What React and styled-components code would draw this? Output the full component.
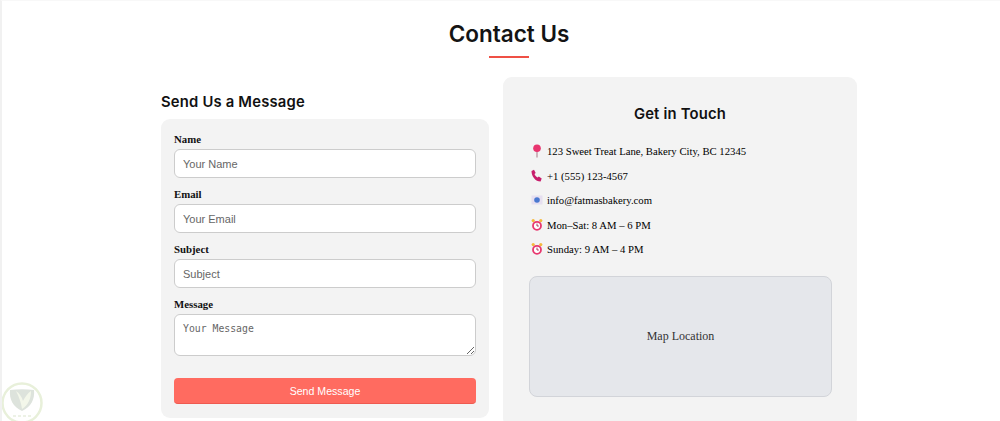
import React from "react";
import styled, { createGlobalStyle } from "styled-components";

const GlobalStyle = createGlobalStyle`
  html, body { margin: 0; padding: 0; background: #fff; height: 100%; overflow: hidden; }
  * { box-sizing: border-box; }
`;

const Page = styled.section`
  position: relative;
  width: 1000px;
  height: 421px;
  overflow: hidden;
  background: #fff;
  border-left: 2px solid #f1f1f1;
  border-top: 1px solid #f8f8f8;
  padding: 20px 0 0 16px;
  font-family: "Liberation Serif", serif;
`;
const Title = styled.h2`
  margin: 0;
  width: 982px;
  text-align: center;
  font: 600 22.5px/26px Inter, sans-serif;
  color: #141414;
`;
const Rule = styled.div`
  width: 40px;
  height: 2px;
  margin: 9px auto 0;
  background: #ef5045;
`;
const RuleRow = styled.div`
  width: 982px;
`;
const Columns = styled.div`
  display: grid;
  grid-template-columns: 328px 354px;
  gap: 14px;
  width: 696px;
  margin: 19px 0 0 143px;
`;
const Left = styled.div`
  padding-top: 16px;
`;
const SubTitle = styled.h3`
  margin: 0 0 8px;
  font: 600 14.8px/18px Inter, sans-serif;
  letter-spacing: 0.2px;
  color: #111;
`;
const FormCard = styled.form`
  height: 299px;
  padding: 14px 13px 0 13px;
  background: #f3f3f3;
  border-radius: 9px;
`;
const Field = styled.div`
  margin-bottom: 10px;
`;
const Label = styled.label`
  display: block;
  margin-bottom: 3px;
  font-size: 10.8px;
  line-height: 13px;
  font-weight: 700;
  color: #111;
`;
const Input = styled.input`
  display: block;
  width: 302px;
  height: 29px;
  padding: 0 8px;
  background: #fff;
  border: 1px solid #ccc;
  border-radius: 6px;
  font: 11px "Liberation Sans", sans-serif;
  &::placeholder { color: #666; opacity: 1; }
`;
const TextArea = styled.textarea`
  display: block;
  width: 302px;
  height: 42px;
  padding: 8px;
  background: #fff;
  border: 1px solid #ccc;
  border-radius: 6px;
  font: 9.8px/12px "DejaVu Sans Mono", monospace;
  &::placeholder { color: #666; opacity: 1; }
`;
const SendButton = styled.button`
  display: block;
  width: 302px;
  height: 26px;
  margin-top: 22px;
  background: #ff6b60;
  border: 0;
  border-bottom: 1px solid #ee5a50;
  border-radius: 4px;
  color: #fff;
  font: 10.6px "Liberation Sans", sans-serif;
`;
const InfoPanel = styled.div`
  height: 350px;
  padding: 28px 26px 0;
  background: #f3f3f3;
  border-radius: 9px;
`;
const InfoTitle = styled.h3`
  margin: 0 0 15px;
  text-align: center;
  font: 600 14.8px/19px Inter, sans-serif;
  letter-spacing: 0.2px;
  color: #111;
`;
const InfoRow = styled.div`
  display: flex;
  align-items: center;
  gap: 4px;
  height: 24.5px;
  padding-left: 2px;
  font-size: 10.7px;
  color: #000;
`;
const IconBox = styled.span`
  display: inline-flex;
  width: 12px;
  height: 14px;
  align-items: center;
  justify-content: center;
`;
const MapBox = styled.div`
  display: flex;
  align-items: center;
  justify-content: center;
  width: 303px;
  height: 121px;
  margin-top: 14px;
  background: #e5e7eb;
  border: 1px solid #d2d4d9;
  border-radius: 8px;
  font-size: 12px;
  color: #333;
`;
const Badge = styled.svg`
  position: absolute;
  left: -2px;
  top: 378px;
`;

const Pin = () => (
  <svg width="12" height="14" viewBox="0 0 12 14">
    <path d="M6 7v6.500" stroke="#b58a96" strokeWidth="1.200" />
    <circle cx="6" cy="4.200" r="3.800" fill="#e8356f" />
  </svg>
);
const Phone = () => (
  <svg width="12" height="14" viewBox="0 0 12 14">
    <path d="M0.500 2 3 0.700l1.700 3.300-1.200 1.100c.5 1.500 1.600 2.700 3 3.400l1.300-1.100 2.900 2L9.600 12.500C4.500 12.500.5 7.500.5 2Z" fill="#c81e6c" />
  </svg>
);
const Mail = () => (
  <svg width="12" height="14" viewBox="0 0 12 14">
    <rect x="0.500" y="2.500" width="11" height="9" fill="#e6dff0" />
    <circle cx="6" cy="7" r="2.800" fill="#4a78d0" />
  </svg>
);
const Clock = () => (
  <svg width="12" height="14" viewBox="0 0 12 14">
    <circle cx="2.200" cy="2.600" r="1.600" fill="#f5b93e" />
    <circle cx="9.800" cy="2.600" r="1.600" fill="#f5b93e" />
    <circle cx="6" cy="7.800" r="4" fill="#fff" stroke="#e8386f" strokeWidth="1.800" />
    <path d="M6 5.600v2.400h1.800" fill="none" stroke="#a3224c" strokeWidth="0.900" />
  </svg>
);
const Watermark = () => (
  <Badge width="44" height="44" viewBox="0 0 44 44">
    <circle cx="22" cy="24" r="19.500" fill="#fff" stroke="#e8f0da" strokeWidth="2.500" />
    <path d="M10 11c8-1 16-1 24 0 1 9-3 17-12 21-9-4-13-12-12-21Z" fill="#dde3dc" />
    <path d="M16 12c3 6 5 11 6 18 6-4 9-10 9-18-3 2-6 6-8 10-1-4-4-8-7-10Z" fill="#f3f7ea" />
    <path d="M13 37h18" stroke="#e8eede" strokeWidth="1.500" strokeDasharray="3 2" />
  </Badge>
);

const infos = [
  { icon: <Pin />, text: "123 Sweet Treat Lane, Bakery City, BC 12345" },
  { icon: <Phone />, text: "+1 (555) 123-4567" },
  { icon: <Mail />, text: "info@fatmasbakery.com" },
  { icon: <Clock />, text: "Mon–Sat: 8 AM – 6 PM" },
  { icon: <Clock />, text: "Sunday: 9 AM – 4 PM" },
];

export default function App() {
  return (
    <Page>
      <GlobalStyle />
      <Title>Contact Us</Title>
      <RuleRow>
        <Rule />
      </RuleRow>
      <Columns>
        <Left>
          <SubTitle>Send Us a Message</SubTitle>
          <FormCard>
            <Field>
              <Label>Name</Label>
              <Input placeholder="Your Name" />
            </Field>
            <Field>
              <Label>Email</Label>
              <Input placeholder="Your Email" />
            </Field>
            <Field>
              <Label>Subject</Label>
              <Input placeholder="Subject" />
            </Field>
            <Field>
              <Label>Message</Label>
              <TextArea placeholder="Your Message" />
            </Field>
            <SendButton type="button">Send Message</SendButton>
          </FormCard>
        </Left>
        <InfoPanel>
          <InfoTitle>Get in Touch</InfoTitle>
          {infos.map((item) => (
            <InfoRow key={item.text}>
              <IconBox>{item.icon}</IconBox>
              {item.text}
            </InfoRow>
          ))}
          <MapBox>Map Location</MapBox>
        </InfoPanel>
      </Columns>
      <Watermark />
    </Page>
  );
}
